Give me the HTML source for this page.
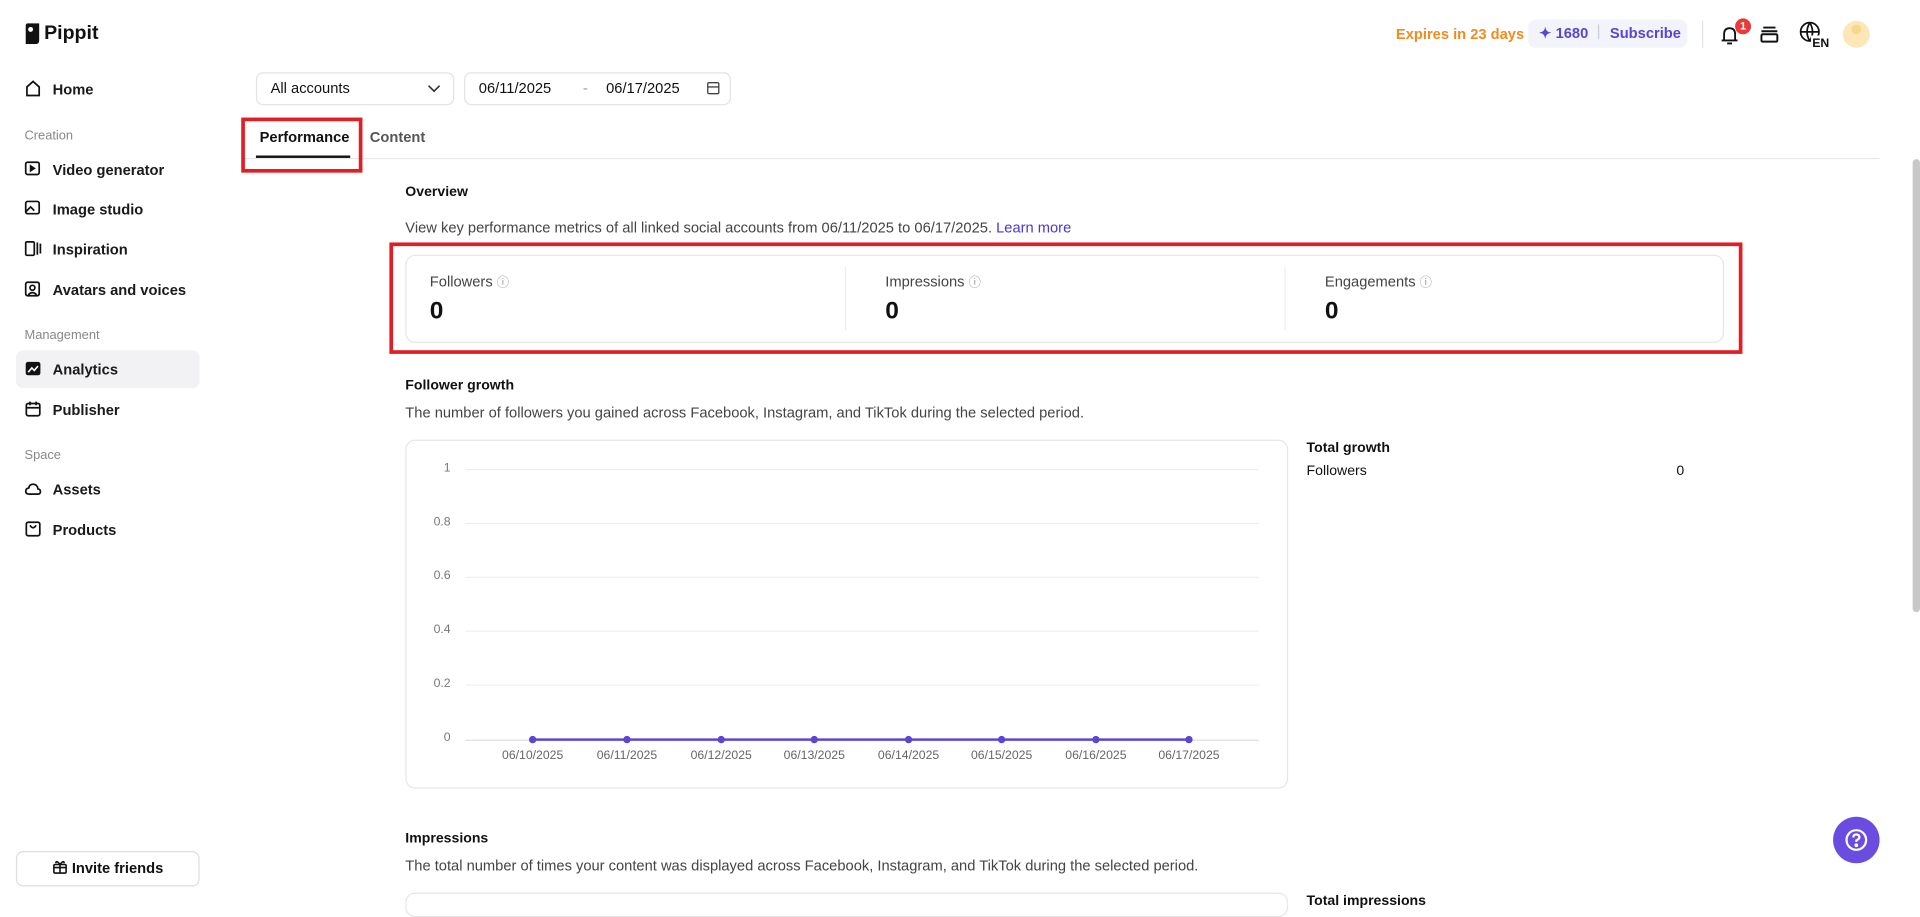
<!DOCTYPE html>
<html><head><meta charset="utf-8"><style>
*{box-sizing:border-box;margin:0;padding:0}
html,body{width:1920px;height:897px;overflow:hidden;background:#fff}
#w{position:absolute;left:0;top:0;width:1568px;height:733px;transform:scale(1.22449);transform-origin:0 0;font-family:"Liberation Sans",sans-serif;color:#111}
.a{position:absolute;white-space:nowrap}
.nav{font-size:12px;font-weight:bold;color:#1a1a1a}
.sec{font-size:10.5px;color:#888}
.ic{position:absolute;width:14px;height:14px}
.g{font-size:12px;color:#444}
.b{font-size:12px;font-weight:bold}
.yl{position:absolute;font-size:10px;color:#777;text-align:right;width:30px;left:338px}
.xl{position:absolute;font-size:10px;color:#666;top:612px;width:70px;text-align:center}
.gl{position:absolute;left:380px;width:648px;height:1px;background:#efefef}
.dot{position:absolute;width:6px;height:6px;border-radius:50%;background:#5a45d6;top:601px}
</style></head><body><div id="w">
<svg class="a" style="left:20px;top:19px" width="13" height="17" viewBox="0 0 13 17"><path d="M1 2Q1 0 3 0H12V14Q12 17 9 17H1Z" fill="#111"/><circle cx="5" cy="5" r="2" fill="#fff"/></svg>
<div class="a" style="left:36px;top:19px;font-size:16px;font-weight:bold">Pippit</div>
<svg class="ic" style="left:20px;top:65px" viewBox="0 0 14 14" fill="none" stroke="#111" stroke-width="1.4"><path d="M2 6L7 1.5 12 6V13H2Z"/></svg>
<div class="a nav" style="left:43px;top:66px">Home</div>
<div class="a sec" style="left:20px;top:105px">Creation</div>
<svg class="ic" style="left:20px;top:131px" viewBox="0 0 14 14" fill="none" stroke="#111" stroke-width="1.4"><rect x="1" y="1.5" width="11" height="10" rx="1.5"/><path d="M5 4.5V8.5L8 6.5Z" fill="#111"/></svg>
<div class="a nav" style="left:43px;top:132px">Video generator</div>
<svg class="ic" style="left:20px;top:163px" viewBox="0 0 14 14" fill="none" stroke="#111" stroke-width="1.4"><rect x="1" y="1.5" width="11" height="10" rx="1.5"/><path d="M1 10L5 6 8 9"/></svg>
<div class="a nav" style="left:43px;top:164px">Image studio</div>
<svg class="ic" style="left:20px;top:196px" viewBox="0 0 14 14" fill="none" stroke="#111" stroke-width="1.4"><rect x="1" y="1.5" width="7" height="11" rx="1"/><path d="M10.5 2V12M13 3V11"/></svg>
<div class="a nav" style="left:43px;top:197px">Inspiration</div>
<svg class="ic" style="left:20px;top:229px" viewBox="0 0 14 14" fill="none" stroke="#111" stroke-width="1.4"><rect x="1" y="1.5" width="11" height="11" rx="1.5"/><circle cx="6.5" cy="6" r="2"/><path d="M3 12Q6.5 8 10 12"/></svg>
<div class="a nav" style="left:43px;top:230px">Avatars and voices</div>
<div class="a sec" style="left:20px;top:268px">Management</div>
<div class="a" style="left:13px;top:286px;width:150px;height:31px;background:#f2f2f4;border-radius:6px"></div>
<svg class="ic" style="left:20px;top:294px" viewBox="0 0 14 14"><rect x="1" y="1.5" width="12" height="11" rx="2" fill="#111"/><path d="M3 10L6 6.5 8 8.5 11 5" stroke="#fff" stroke-width="1.3" fill="none"/></svg>
<div class="a nav" style="left:43px;top:295px">Analytics</div>
<svg class="ic" style="left:20px;top:327px" viewBox="0 0 14 14" fill="none" stroke="#111" stroke-width="1.4"><rect x="1.5" y="2.5" width="11" height="10" rx="1.5"/><path d="M1.5 6H12.5M4.5 1V4M9.5 1V4"/></svg>
<div class="a nav" style="left:43px;top:328px">Publisher</div>
<div class="a sec" style="left:20px;top:366px">Space</div>
<svg class="ic" style="left:20px;top:392px" viewBox="0 0 14 14" fill="none" stroke="#111" stroke-width="1.4"><path d="M4 11.5H11Q13 11.5 13 9.5Q13 7.5 11 7.3Q10.5 3.5 7 3.5Q4 3.5 3.5 6.5Q1 7 1 9.2Q1 11.5 4 11.5Z"/></svg>
<div class="a nav" style="left:43px;top:393px">Assets</div>
<svg class="ic" style="left:20px;top:425px" viewBox="0 0 14 14" fill="none" stroke="#111" stroke-width="1.4"><rect x="1.5" y="1.5" width="11" height="11" rx="1.5"/><path d="M4.5 4Q7 8 9.5 4"/></svg>
<div class="a nav" style="left:43px;top:426px">Products</div>
<div class="a" style="left:13px;top:695px;width:150px;height:29px;border:1px solid #ddd;border-radius:6px;font-size:12px;font-weight:bold;text-align:center;line-height:27px">
<svg width="12" height="12" viewBox="0 0 12 12" style="vertical-align:-1px;margin-right:4px" fill="none" stroke="#111" stroke-width="1.3"><rect x="1" y="4" width="10" height="7" rx="1"/><path d="M1 6.5H11M6 4V11M6 4Q3 0 2.5 3M6 4Q9 0 9.5 3"/></svg>Invite friends</div>
<div class="a" style="left:1140px;top:21px;font-size:12px;font-weight:bold;color:#f08c1f">Expires in 23 days</div>
<div class="a" style="left:1248px;top:16px;width:130px;height:23px;background:#f3f3fb;border-radius:6px;font-size:12px;font-weight:bold;color:#5b45d0;line-height:23px;padding-left:9px">✦ 1680 <span style="display:inline-block;width:1px;height:12px;background:#ccc;margin:0 5px;vertical-align:-1px"></span> Subscribe</div>
<div class="a" style="left:1390px;top:17px;width:1px;height:22px;background:#e5e5e5"></div>
<svg class="a" style="left:1404px;top:19px" width="17" height="18" viewBox="0 0 17 18" fill="none" stroke="#111" stroke-width="1.5"><path d="M2 14H15M4 14V9Q4 4 8.5 4Q13 4 13 9V14M6.5 16.5H10.5"/></svg>
<div class="a" style="left:1417px;top:15px;width:13px;height:13px;border-radius:50%;background:#e83a3a;color:#fff;font-size:9px;font-weight:bold;text-align:center;line-height:13px">1</div>
<svg class="a" style="left:1437px;top:20px" width="16" height="16" viewBox="0 0 16 16" fill="none" stroke="#111" stroke-width="1.6"><path d="M3 2.5H13M1.5 5.5H14.5"/><rect x="1.5" y="8" width="13" height="6" rx="1"/></svg>
<svg class="a" style="left:1469px;top:17px" width="26" height="22" viewBox="0 0 26 22"><g fill="none" stroke="#111" stroke-width="1.4"><circle cx="9" cy="9" r="7.5"/><path d="M1.5 9H16.5M9 1.5Q4.5 9 9 16.5M9 1.5Q13.5 9 9 16.5"/></g><rect x="10" y="12" width="15" height="10" fill="#fff"/><text x="11" y="21.5" font-size="10" font-weight="bold" fill="#111" font-family="Liberation Sans">EN</text></svg>
<div class="a" style="left:1505px;top:17px;width:22px;height:22px;border-radius:50%;background:#fde7b8"></div>
<div class="a" style="left:1512px;top:20px;width:8px;height:8px;border-radius:50%;background:#f8d98a"></div>
<div class="a" style="left:209px;top:59px;width:162px;height:27px;border:1px solid #e3e3e3;border-radius:6px;font-size:12px;line-height:25px;padding-left:11px">All accounts</div>
<svg class="a" style="left:349px;top:69px" width="11" height="7" viewBox="0 0 11 7" fill="none" stroke="#333" stroke-width="1.3"><path d="M1 1L5.5 5.5 10 1"/></svg>
<div class="a" style="left:379px;top:59px;width:218px;height:27px;border:1px solid #e3e3e3;border-radius:6px;font-size:12px;line-height:25px"><span style="position:absolute;left:11px">06/11/2025</span><span style="position:absolute;left:96px;color:#999">-</span><span style="position:absolute;left:115px">06/17/2025</span></div>
<svg class="a" style="left:577px;top:66px" width="11" height="12" viewBox="0 0 11 12" fill="none" stroke="#444" stroke-width="1.1"><rect x="1" y="1.5" width="9" height="9" rx="1"/><path d="M1 5H10"/></svg>
<div class="a" style="left:212px;top:105px;font-size:12px;font-weight:bold">Performance</div>
<div class="a" style="left:209px;top:127px;width:77px;height:2px;background:#111"></div>
<div class="a" style="left:302px;top:105px;font-size:12px;font-weight:bold;color:#555">Content</div>
<div class="a" style="left:197px;top:129px;width:1338px;height:1px;background:#e8e8e8"></div>
<div class="a" style="left:197px;top:96px;width:99px;height:45px;border:3px solid #e11d25"></div>
<div class="a" style="left:1562px;top:130px;width:6px;height:370px;background:#c8c8c8;border-radius:3px"></div>
<div class="a b" style="left:331px;top:151px;font-size:11.5px">Overview</div>
<div class="a g" style="left:331px;top:179px">View key performance metrics of all linked social accounts from 06/11/2025 to 06/17/2025. <span style="color:#4b36d0">Learn more</span></div>
<div class="a" style="left:331px;top:208px;width:1077px;height:72px;border:1px solid #e6e6e6;border-radius:8px"></div>
<div class="a" style="left:690px;top:218px;width:1px;height:52px;background:#ececec"></div>
<div class="a" style="left:1049px;top:218px;width:1px;height:52px;background:#ececec"></div>
<div class="a g" style="left:351px;top:222px">Followers <span style="font-size:10px;color:#999">ⓘ</span></div>
<div class="a g" style="left:723px;top:222px">Impressions <span style="font-size:10px;color:#999">ⓘ</span></div>
<div class="a g" style="left:1082px;top:222px">Engagements <span style="font-size:10px;color:#999">ⓘ</span></div>
<div class="a" style="left:351px;top:243px;font-size:20px;font-weight:bold">0</div>
<div class="a" style="left:723px;top:243px;font-size:20px;font-weight:bold">0</div>
<div class="a" style="left:1082px;top:243px;font-size:20px;font-weight:bold">0</div>
<div class="a" style="left:318px;top:198px;width:1105px;height:91px;border:3px solid #e11d25"></div>
<div class="a b" style="left:331px;top:309px;font-size:11.5px">Follower growth</div>
<div class="a g" style="left:331px;top:330px">The number of followers you gained across Facebook, Instagram, and TikTok during the selected period.</div>
<div class="a" style="left:331px;top:359px;width:721px;height:285px;border:1px solid #e6e6e6;border-radius:8px"></div>
<div class="yl" style="top:377px">1</div><div class="gl" style="top:383px"></div>
<div class="yl" style="top:421px">0.8</div><div class="gl" style="top:427px"></div>
<div class="yl" style="top:465px">0.6</div><div class="gl" style="top:471px"></div>
<div class="yl" style="top:509px">0.4</div><div class="gl" style="top:515px"></div>
<div class="yl" style="top:553px">0.2</div><div class="gl" style="top:559px"></div>
<div class="yl" style="top:597px">0</div><div class="gl" style="top:604px;background:#ddd"></div>
<div class="a" style="left:435px;top:603px;width:537px;height:2px;background:#5a45d6"></div>
<div class="dot" style="left:432px"></div><div class="dot" style="left:509px"></div><div class="dot" style="left:586px"></div><div class="dot" style="left:662px"></div><div class="dot" style="left:739px"></div><div class="dot" style="left:815px"></div><div class="dot" style="left:892px"></div><div class="dot" style="left:968px"></div>
<div class="xl" style="left:400px">06/10/2025</div><div class="xl" style="left:477px">06/11/2025</div><div class="xl" style="left:554px">06/12/2025</div><div class="xl" style="left:630px">06/13/2025</div><div class="xl" style="left:707px">06/14/2025</div><div class="xl" style="left:783px">06/15/2025</div><div class="xl" style="left:860px">06/16/2025</div><div class="xl" style="left:936px">06/17/2025</div>
<div class="a b" style="left:1067px;top:360px;font-size:11.5px">Total growth</div>
<div class="a" style="left:1067px;top:379px;font-size:11.5px">Followers</div>
<div class="a" style="left:1369px;top:379px;font-size:11.5px">0</div>
<div class="a b" style="left:331px;top:679px;font-size:11.5px">Impressions</div>
<div class="a g" style="left:331px;top:700px">The total number of times your content was displayed across Facebook, Instagram, and TikTok during the selected period.</div>
<div class="a" style="left:331px;top:729px;width:721px;height:20px;border:1px solid #e6e6e6;border-radius:8px"></div>
<div class="a b" style="left:1067px;top:730px;font-size:11.5px">Total impressions</div>
<div class="a" style="left:1497px;top:667px;width:38px;height:38px;border-radius:50%;background:#6a4ce0"></div>
<svg class="a" style="left:1506px;top:676px" width="20" height="20" viewBox="0 0 20 20" fill="none" stroke="#fff" stroke-width="1.8"><circle cx="10" cy="10" r="8"/><path d="M7.5 8Q7.5 5.5 10 5.5Q12.5 5.5 12.5 7.8Q12.5 9.3 10 10.3V11.5"/><circle cx="10" cy="14.3" r="0.6" fill="#fff"/></svg>
</div></body></html>
